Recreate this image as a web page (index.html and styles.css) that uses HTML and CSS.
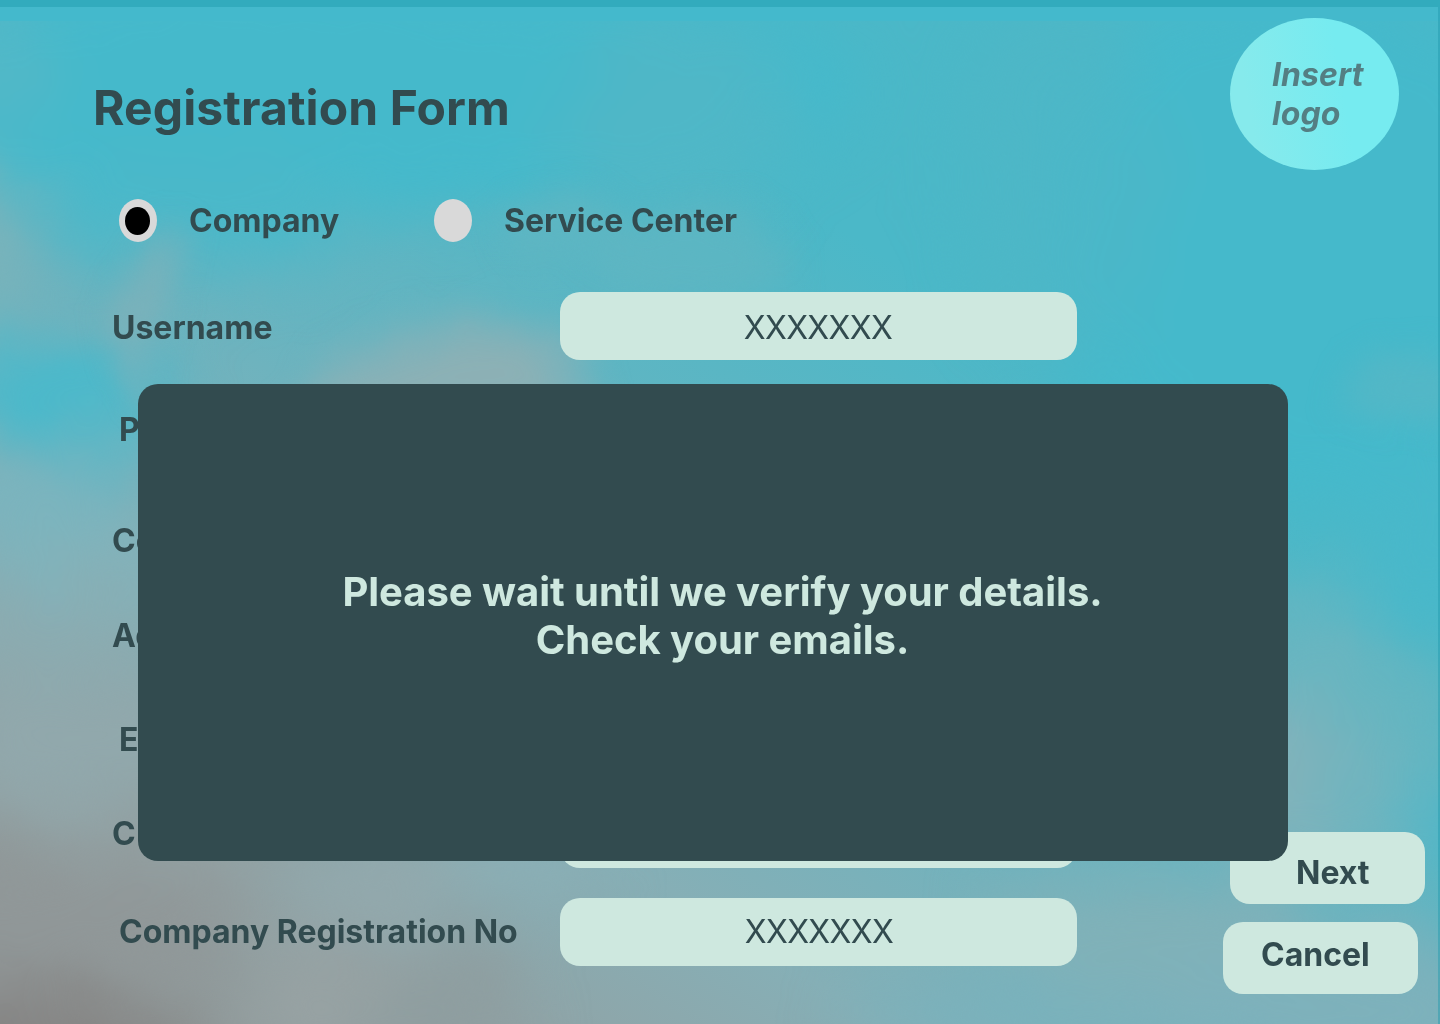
FILE: index.html
```html
<!DOCTYPE html>
<html lang="en">
<head>
<meta charset="utf-8">
<title>Registration Form</title>
<link rel="stylesheet" href="styles.css">
</head>
<body>
<div class="page">
  <svg class="sky" viewBox="0 0 1440 1024" preserveAspectRatio="none" aria-hidden="true">
    <defs>
      <linearGradient id="base" gradientUnits="userSpaceOnUse" x1="860" y1="240" x2="300" y2="1130">
        <stop offset="0" stop-color="#4bb8c8"/>
        <stop offset=".35" stop-color="#68b4c0"/>
        <stop offset=".62" stop-color="#86afb6"/>
        <stop offset=".85" stop-color="#92a1a3"/>
        <stop offset="1" stop-color="#8f9696"/>
      </linearGradient>
      <filter id="soft" filterUnits="userSpaceOnUse" x="-200" y="-200" width="1840" height="1424" color-interpolation-filters="sRGB">
        <feGaussianBlur stdDeviation="32" result="b"/>
        <feTurbulence type="fractalNoise" baseFrequency=".007" numOctaves="4" seed="7" result="n"/>
        <feDisplacementMap in="b" in2="n" scale="60" xChannelSelector="R" yChannelSelector="G"/>
      </filter>
      <filter id="wisp" filterUnits="userSpaceOnUse" x="-200" y="-200" width="1840" height="1424" color-interpolation-filters="sRGB">
        <feGaussianBlur stdDeviation="16" result="b"/>
        <feTurbulence type="fractalNoise" baseFrequency=".009" numOctaves="4" seed="3" result="n"/>
        <feDisplacementMap in="b" in2="n" scale="30" xChannelSelector="R" yChannelSelector="G"/>
      </filter>
    </defs>
    <rect width="1440" height="1024" fill="url(#base)"/>
    <g filter="url(#soft)">
      <ellipse cx="300" cy="90" rx="560" ry="130" fill="#45b9cb"/>
      <ellipse cx="200" cy="210" rx="150" ry="60" fill="#4bb8c9"/>
      <ellipse cx="1300" cy="240" rx="260" ry="260" fill="#45b9cb"/>
      <ellipse cx="1060" cy="180" rx="100" ry="180" fill="#4fb7c6" opacity=".7"/>
      <ellipse cx="670" cy="130" rx="110" ry="110" fill="#54b7c4" opacity=".7"/>
      <ellipse cx="0" cy="60" rx="50" ry="60" fill="#56b8c5" opacity=".8"/>
      <ellipse cx="-20" cy="250" rx="50" ry="90" fill="#78b3bb"/>
      <ellipse cx="60" cy="390" rx="110" ry="60" fill="#49b9cb"/>
      <ellipse cx="110" cy="450" rx="60" ry="35" fill="#60b6c4"/>
      <ellipse cx="0" cy="510" rx="140" ry="45" fill="#7ab4be"/>
      <ellipse cx="90" cy="570" rx="100" ry="30" fill="#82b3bb"/>
      <ellipse cx="20" cy="630" rx="150" ry="45" fill="#8babb0"/>
      <ellipse cx="80" cy="740" rx="150" ry="60" fill="#91a8ac"/>
      <ellipse cx="180" cy="850" rx="120" ry="40" fill="#92a1a3"/>
      <ellipse cx="30" cy="920" rx="200" ry="70" fill="#909798"/>
      <ellipse cx="-20" cy="1060" rx="210" ry="70" fill="#858483"/>
      <ellipse cx="330" cy="1010" rx="90" ry="60" fill="#97a2a3"/>
      <ellipse cx="380" cy="890" rx="90" ry="40" fill="#93a9ad"/>
      <ellipse cx="520" cy="870" rx="70" ry="30" fill="#8bb0b7"/>
      <ellipse cx="450" cy="1010" rx="70" ry="50" fill="#8e9d9f"/>
      <ellipse cx="1150" cy="930" rx="170" ry="60" fill="#80b1b8"/>
      <ellipse cx="1000" cy="1010" rx="150" ry="30" fill="#78b2bd"/>
      <ellipse cx="1330" cy="1010" rx="200" ry="70" fill="#7eb1bb"/>
      <ellipse cx="1310" cy="660" rx="90" ry="70" fill="#69b5c0"/>
      <ellipse cx="1400" cy="710" rx="70" ry="50" fill="#66b5c0"/>
      <ellipse cx="1290" cy="780" rx="80" ry="80" fill="#83b2ba"/>
      <ellipse cx="1365" cy="800" rx="50" ry="60" fill="#72b4be"/>
      <ellipse cx="1465" cy="810" rx="60" ry="45" fill="#50b7c8"/>
      <ellipse cx="1430" cy="540" rx="80" ry="80" fill="#48b8ca"/>
    </g>
    <g filter="url(#wisp)">
      <path d="M290 420Q320 345 390 325Q470 310 550 325Q590 340 600 430Z" fill="#83b1b8" opacity=".85"/>
      <path d="M300 410Q340 375 440 355Q510 340 540 355L555 410Z" fill="#92b0b4" opacity=".75"/>
      <path d="M105 320Q125 270 180 220L190 250Q155 310 150 410L118 370Z" fill="#83b1b8" opacity=".65"/>
      <ellipse cx="560" cy="225" rx="60" ry="35" fill="#62b5c1" opacity=".6"/>
      <ellipse cx="690" cy="260" rx="100" ry="50" fill="#62b5c1" opacity=".6"/>
      <ellipse cx="1410" cy="390" rx="70" ry="35" fill="#58b6c4" opacity=".7"/>
    </g>
    <rect width="1440" height="21" fill="#44b9cc"/>
    <rect width="1440" height="7" fill="#32abbd"/>
    <rect x="1438" y="7" width="2" height="1017" fill="#2198ac" opacity=".45"/>
  </svg>

  <header class="header">
    <h1 class="title">Registration Form</h1>
    <div class="logo"><span class="logo-text">Insert<br>logo</span></div>
  </header>

  <div class="account-types">
    <div class="radio"><span class="radio-mark radio-on"></span>Company</div>
    <div class="radio"><span class="radio-mark"></span>Service Center</div>
  </div>

  <div class="content">
    <form class="fields">
      <span class="label first">Username</span><span class="input">XXXXXXX</span>
      <span class="label inset">Password</span><span class="input"></span>
      <span class="label">Company Name</span><span class="input"></span>
      <span class="label">Address</span><span class="input"></span>
      <span class="label inset">Email</span><span class="input"></span>
      <span class="label spaced">City</span><span class="input"></span>
      <span class="label inset">Company Registration No</span><span class="input last">XXXXXXX</span>
    </form>
    <div class="actions">
      <div class="button next">Next</div>
      <div class="button cancel">Cancel</div>
    </div>
  </div>

  <div class="modal">
    <p class="message">Please wait until we verify your details.<br>Check your emails.</p>
  </div>
</div>
</body>
</html>
```
FILE: styles.css
```css
* {
  box-sizing: border-box;
}

body {
  margin: 0;
  font-family: Inter, "Liberation Sans", sans-serif;
  font-size: 32px;
  line-height: 39px;
  font-weight: 700;
  color: #324b4f;
}

.page {
  position: relative;
  isolation: isolate;
  width: 1440px;
  height: 1024px;
  overflow: hidden;
  background: #44b9cc;
}

.sky {
  position: absolute;
  inset: 0;
  z-index: -1;
  width: 1440px;
  height: 1024px;
}

.header {
  display: flex;
  justify-content: space-between;
  align-items: flex-start;
  height: 199px;
  padding: 18px 41px 0 93px;
}

.title {
  margin: 61px 0 0;
  font-size: 48px;
  line-height: 58px;
  font-weight: 700;
  letter-spacing: 0.1px;
}

.logo {
  width: 169px;
  height: 152px;
  padding: 37px 0 0 42px;
  border-radius: 50%;
  background: linear-gradient(80deg, #86eaec 15%, #76ebf0 65%);
}

.logo-text {
  color: #547e83;
  font-style: italic;
  letter-spacing: 0.1px;
}

.account-types {
  display: flex;
  height: 93px;
  padding-left: 119px;
}

.radio {
  display: flex;
  align-items: center;
  gap: 32px;
  width: 315px;
  height: 43px;
  white-space: nowrap;
}

.radio-mark {
  display: flex;
  flex: none;
  width: 38px;
  height: 43px;
  padding: 8px 7px 7px 6px;
  border-radius: 50%;
  background: #d9d9d9;
}

.radio-on::before {
  content: "";
  flex: 1;
  border-radius: 50%;
  background: #000;
}

.content {
  display: flex;
  justify-content: space-between;
  padding: 0 15px 0 112px;
}

.fields {
  display: grid;
  grid-template-columns: 448px 517px;
  grid-template-rows: 104px 111px 95px 104px 94px 98px 68px;
}

.label {
  padding-top: 14px;
  white-space: nowrap;
}

.first {
  padding-top: 16px;
}

.inset {
  padding-left: 7px;
}

.spaced {
  letter-spacing: 2px;
}

.input {
  height: 68px;
  padding: 16px 1px 0 0;
  border-radius: 20px;
  background: #cee8df;
  font-weight: 400;
  letter-spacing: -0.6px;
  text-align: center;
}

.input.last {
  padding: 14px 0 0 1px;
}

.actions {
  display: flex;
  flex-direction: column;
  gap: 18px;
  padding-top: 540px;
}

.button {
  width: 195px;
  height: 72px;
  border-radius: 20px;
  background: #cee8df;
}

.next {
  padding: 21px 0 0 66px;
}

.cancel {
  margin-left: -7px;
  padding: 13px 0 0 38px;
}

.modal {
  position: absolute;
  left: 138px;
  top: 384px;
  display: flex;
  align-items: center;
  justify-content: center;
  width: 1150px;
  height: 477px;
  padding: 0 0 13px 19px;
  border-radius: 20px;
  background: #324b4f;
}

.message {
  margin: 0;
  color: #cee8df;
  font-size: 40px;
  line-height: 48px;
  letter-spacing: -0.03px;
  text-align: center;
}
```
